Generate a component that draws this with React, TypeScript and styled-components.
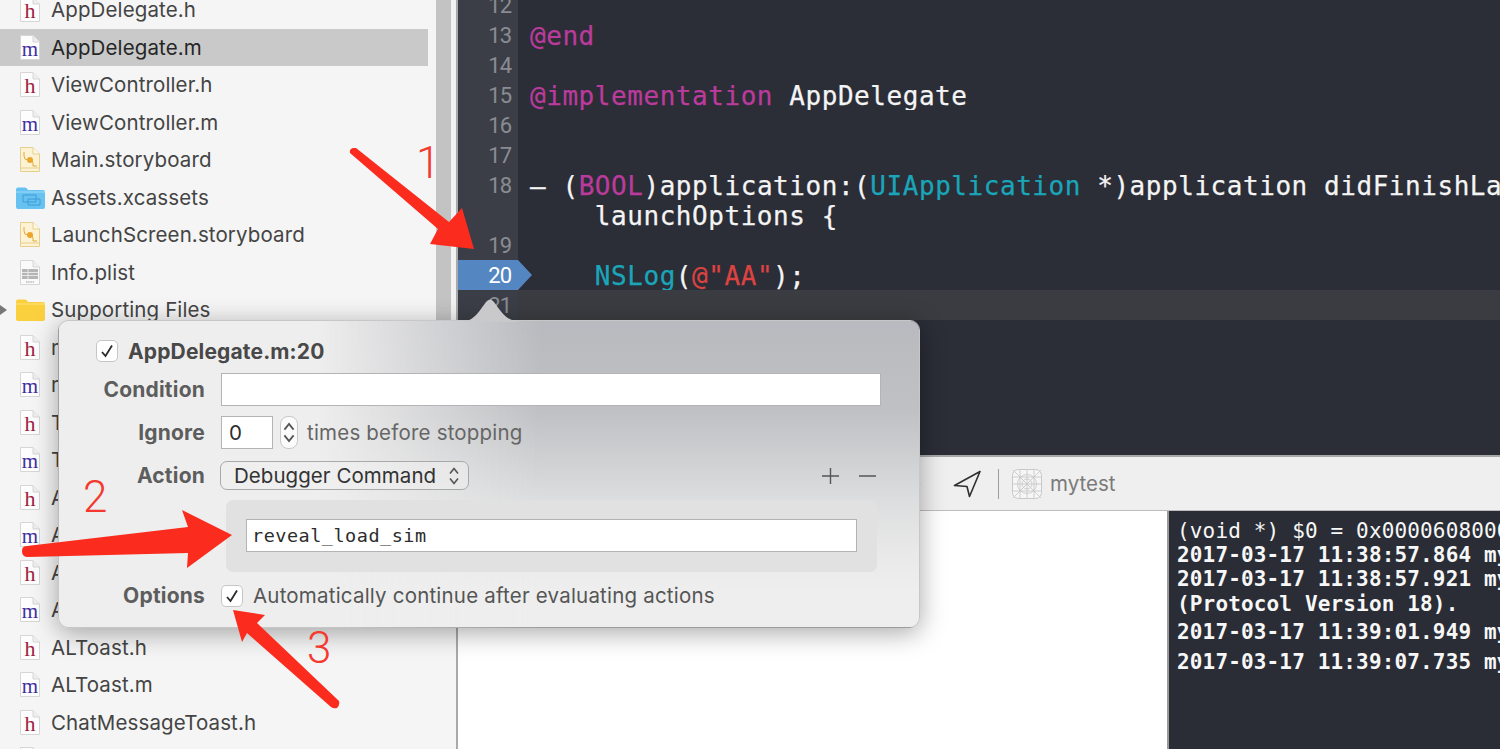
import React from "react";
import styled, { createGlobalStyle } from "styled-components";

const Global = createGlobalStyle`
  html, body { margin: 0; padding: 0; background: #fff; overflow: hidden; }
  * { box-sizing: border-box; }
`;

const UI = `"Inter", "Roboto", "Liberation Sans", sans-serif`;
const MONO = `"DejaVu Sans Mono", "Liberation Mono", monospace`;

const Page = styled.div`
  position: relative;
  width: 1500px;
  height: 749px;
  overflow: hidden;
  display: flex;
  font-family: ${UI};
`;

/* ---------- navigator ---------- */
const Sidebar = styled.aside`
  position: relative;
  flex: 0 0 458px;
  height: 749px;
  background: #f5f5f5;
  border-right: 2px solid #a9a9a9;
  overflow: hidden;
`;
const FileList = styled.ul`
  list-style: none;
  margin: -9px 0 0;
  padding: 0;
`;
const FileRow = styled.li<{ $selected?: boolean }>`
  position: relative;
  width: 428px;
  height: 37.5px;
  display: flex;
  align-items: center;
  padding-left: 51px;
  font-size: 20.5px;
  letter-spacing: 0.12px;
  white-space: nowrap;
  color: ${(p) => (p.$selected ? "#262626" : "#444444")};
  background: ${(p) => (p.$selected ? "#c9c9c9" : "transparent")};
`;
const RowIcon = styled.span<{ $wide?: boolean }>`
  position: absolute;
  left: ${(p) => (p.$wide ? "16px" : "19px")};
  top: ${(p) => (p.$wide ? "8px" : "6px")};
  display: flex;
`;
const Disclosure = styled.span`
  position: absolute;
  left: 0;
  top: 14px;
  width: 0;
  height: 0;
  border-left: 7px solid #777;
  border-top: 5px solid transparent;
  border-bottom: 5px solid transparent;
`;
const ScrollTrack = styled.div`
  position: absolute;
  left: 436px;
  top: 0;
  width: 22px;
  height: 340px;
  background: #f2f2f2;
`;
const ScrollThumb = styled.div`
  width: 15px;
  height: 100%;
  background: #c3c3c3;
`;

/* ---------- main column ---------- */
const Main = styled.main`
  flex: 1;
  min-width: 0;
  display: flex;
  flex-direction: column;
`;
const Editor = styled.section`
  flex: 0 0 465px;
  height: 465px;
  margin-top: -10px;
  background: #2b2d37;
  overflow: hidden;
`;
const Line = styled.div<{ $current?: boolean }>`
  height: 30px;
  display: flex;
  background: ${(p) => (p.$current ? "#3b3c41" : "transparent")};
`;
const Gutter = styled.div<{ $active?: boolean }>`
  position: relative;
  flex: 0 0 60px;
  padding: 1px 7px 0 0;
  text-align: right;
  font-family: "Roboto", sans-serif;
  font-size: 22px;
  letter-spacing: -1px;
  line-height: 29px;
  color: ${(p) => (p.$active ? "#ffffff" : "#8a8c92")};
  background: ${(p) => (p.$active ? "#5487c2" : "#3c3e47")};
`;
const BreakTip = styled.span`
  position: absolute;
  left: 60px;
  top: 0;
  width: 0;
  height: 0;
  border-left: 14px solid #5487c2;
  border-top: 15px solid transparent;
  border-bottom: 15px solid transparent;
`;
const Code = styled.pre`
  margin: 0;
  padding: 1px 0 0 12px;
  font-family: ${MONO};
  font-size: 26px;
  letter-spacing: 0.55px;
  line-height: 30px;
  color: #f4f4f4;
  -webkit-text-stroke: 0.25px currentColor;
  white-space: pre;
  overflow: hidden;
  flex: 1;
  min-width: 0;
`;
const Tok = styled.span<{ $c: "kw" | "type" | "str" }>`
  color: ${(p) => ({ kw: "#bb3b9c", type: "#1aa5b9", str: "#dc4341" }[p.$c])};
`;

const Toolbar = styled.div`
  flex: 0 0 56px;
  display: flex;
  align-items: center;
  padding-left: 447px;
  background: #efefef;
  border-top: 2px solid #a8a8a8;
  border-bottom: 1px solid #bdbdbd;
`;
const ToolIcon = styled.span<{ $mr: number }>`
  display: flex;
  margin-right: ${(p) => p.$mr}px;
`;
const ToolSep = styled.span`
  width: 1px;
  height: 30px;
  background: #9d9d9d;
  margin-right: 13px;
`;
const Target = styled.span`
  font-size: 20.5px;
  color: #7a7a7a;
`;
const Bottom = styled.div`
  flex: 1;
  display: flex;
  min-height: 0;
`;
const Vars = styled.div`
  flex: 0 0 709px;
  background: #ffffff;
`;
const Console = styled.div`
  flex: 1;
  min-width: 0;
  background: #2a2d36;
  border-left: 2px solid #9a9a9a;
  padding: 8px 0 0 8px;
  overflow: hidden;
  font-family: ${MONO};
  font-size: 21px;
  letter-spacing: 0.15px;
  color: #f7f7f7;
`;
const LogLine = styled.div<{ $bold?: boolean; $gap?: number }>`
  height: 24px;
  line-height: 24px;
  white-space: nowrap;
  font-weight: ${(p) => (p.$bold ? 700 : 400)};
  margin-top: ${(p) => p.$gap ?? 0}px;
`;

/* ---------- breakpoint popover ---------- */
const Popover = styled.div`
  position: absolute;
  left: 58px;
  top: 320px;
  width: 862px;
  height: 308px;
  border-radius: 10px;
  border: 1px solid rgba(0, 0, 0, 0.16);
  box-shadow: 0 5px 26px rgba(0, 0, 0, 0.34);
  padding: 19px 38px 0 0;
  display: flex;
  flex-direction: column;
  font-size: 20.5px;
  background:
    linear-gradient(90deg, #eeeeee 0, #eeeeee 30%, rgba(238, 238, 238, 0) 56%),
    linear-gradient(180deg, #b9babf 0, #c0c1c4 30%, #dcddde 58%, #e9e9e9 76%, #eeeeee 88%);
`;
const PopArrow = styled.svg`
  position: absolute;
  left: 402px;
  top: -24px;
`;
const TitleRow = styled.div`
  display: flex;
  align-items: center;
  gap: 10px;
  margin-left: 37px;
  height: 22px;
  font-weight: 700;
  font-size: 21px;
  letter-spacing: 0.15px;
  color: #484848;
`;
const FormRow = styled.div<{ $top: number; $h: number }>`
  display: grid;
  grid-template-columns: 146px 1fr;
  column-gap: 16px;
  align-items: center;
  height: ${(p) => p.$h}px;
  margin-top: ${(p) => p.$top}px;
`;
const Label = styled.label`
  text-align: right;
  font-weight: 700;
  font-size: 21px;
  letter-spacing: 0.2px;
  color: #5d5d5d;
`;
const Cluster = styled.div`
  display: flex;
  align-items: center;
  min-width: 0;
`;
const TextField = styled.div<{ $w?: number; $mono?: boolean }>`
  width: ${(p) => (p.$w ? `${p.$w}px` : "100%")};
  height: 33px;
  line-height: 31px;
  padding-left: ${(p) => (p.$mono ? 5 : 7)}px;
  background: #ffffff;
  border: 1px solid #b4b4b6;
  font-family: ${(p) => (p.$mono ? MONO : "inherit")};
  font-size: ${(p) => (p.$mono ? "18.5px" : "20.5px")};
  letter-spacing: ${(p) => (p.$mono ? "0.5px" : "0")};
  color: #2c2c2c;
`;
const Stepper = styled.span`
  width: 18px;
  height: 33px;
  margin: 0 9px 0 7px;
  background: #fbfbfb;
  border: 1px solid #c9c9c9;
  border-radius: 8px;
  display: flex;
`;
const Hint = styled.span`
  color: #666666;
  letter-spacing: 0.2px;
`;
const Select = styled.div`
  width: 249px;
  height: 29px;
  margin-left: -1px;
  display: flex;
  align-items: center;
  justify-content: space-between;
  padding: 0 7px 0 13px;
  background: rgba(240, 240, 240, 0.55);
  border: 1px solid #a9a9a9;
  border-radius: 7px;
  color: #333333;
  letter-spacing: 0.05px;
`;
const AddRemove = styled.div`
  margin-left: auto;
  margin-right: 4px;
  display: flex;
`;
const CommandBox = styled.div`
  margin: 10px 0 0 167px;
  width: 651px;
  height: 72px;
  padding: 19px 20px;
  background: #e1e1e1;
  border-radius: 7px;
`;
const CheckBox = styled.span`
  flex: none;
  width: 22px;
  height: 22px;
  background: #ffffff;
  border: 1px solid #c6c6c6;
  border-radius: 5px;
  display: flex;
  align-items: center;
  justify-content: center;
`;
const OptionText = styled.span`
  margin-left: 10px;
  color: #555555;
  letter-spacing: 0.2px;
`;

/* ---------- annotations ---------- */
const Annotations = styled.svg`
  position: absolute;
  left: 0;
  top: 0;
  pointer-events: none;
`;
const Num = styled.span<{ $x: number; $y: number }>`
  position: absolute;
  left: ${(p) => p.$x}px;
  top: ${(p) => p.$y}px;
  font-family: "Roboto", sans-serif;
  font-weight: 300;
  font-size: 44px;
  line-height: 44px;
  color: #f4392f;
`;

/* ---------- icons ---------- */
const FileIcon = ({ kind }: { kind: "h" | "m" }) => (
  <svg width="22" height="25" viewBox="0 0 22 25">
    <path d="M1.5 .5H14L20.5 7V24.5H1.5Z" fill="#fdfdfd" stroke="#d6d6d6" />
    <path d="M14 .5V7H20.5" fill="#eeeeee" stroke="#d6d6d6" />
    <text
      x="11"
      y="21"
      textAnchor="middle"
      fontFamily="'Liberation Serif', serif"
      fontSize={kind === "h" ? 22 : 21}
      fill={kind === "h" ? "#a0223f" : "#3f2f9e"}
    >
      {kind}
    </text>
  </svg>
);
const StoryIcon = () => (
  <svg width="22" height="25" viewBox="0 0 22 25">
    <path d="M1.5 .5H14L20.5 7V24.5H1.5Z" fill="#fdf3d4" stroke="#e6cf8d" />
    <path d="M14 .5V7H20.5" fill="#fff8e4" stroke="#e6cf8d" />
    <path d="M5 5V9Q5 13 9 13H11Q14 13 14 16V19H18" fill="none" stroke="#e0a93c" strokeWidth="1" />
    <circle cx="11" cy="13" r="3" fill="#eca52c" />
    <path d="M2 21H20" stroke="#e6cf8d" />
  </svg>
);
const PlistIcon = () => (
  <svg width="22" height="25" viewBox="0 0 22 25">
    <path d="M1.5 .5H14L20.5 7V24.5H1.5Z" fill="#fafafa" stroke="#d6d6d6" />
    <path d="M14 .5V7H20.5" fill="#eeeeee" stroke="#d6d6d6" />
    <path d="M3 9H19V19H3Z" fill="#b5b5b5" />
    <path d="M3 12.5H19M3 15.5H19M9 9V19" stroke="#f2f2f2" strokeWidth=".8" />
    <path d="M7 22H15" stroke="#999" strokeWidth="1.2" strokeDasharray="1.5 .7" />
  </svg>
);
const FolderIcon = ({ blue }: { blue?: boolean }) => (
  <svg width="29" height="22" viewBox="0 0 29 22">
    <path
      d="M0 2.5Q0 .5 2 .5H9Q11 .5 12 3H27Q29 3 29 5V20Q29 22 27 22H2Q0 22 0 20Z"
      fill={blue ? "#67c2f2" : "#fbd03f"}
    />
    <path d="M0 5H29" stroke={blue ? "#9adbfa" : "#fde37f"} />
    {blue && <path d="M7 8H20V15H7ZM12 12H24V18H12Z" fill="none" stroke="#3f9bd4" strokeWidth="1" />}
  </svg>
);
const CheckMark = () => (
  <svg width="14" height="14" viewBox="0 0 14 14">
    <path d="M2 8L5.5 12L12 1.5" fill="none" stroke="#2b2b2b" strokeWidth="1.8" />
  </svg>
);
const UpDown = ({ w, h }: { w: number; h: number }) => (
  <svg width={w} height={h} viewBox="0 0 14 24">
    <path d="M3 9.5L7 4.5L11 9.5M3 14.5L7 19.5L11 14.5" fill="none" stroke="#555" strokeWidth="1.6" />
  </svg>
);
const Location = () => (
  <svg width="28" height="28" viewBox="0 0 28 28">
    <path d="M27 1.5L1.5 15.5L14 16.5L16.5 26.5Z" fill="none" stroke="#2f2f2f" strokeWidth="1.6" strokeLinejoin="round" />
  </svg>
);
const AppGrid = () => (
  <svg width="30" height="30" viewBox="0 0 30 30">
    <rect x=".5" y=".5" width="29" height="29" rx="6" fill="#f6f6f6" stroke="#c8c8c8" />
    <g fill="none" stroke="#c4c4c4" strokeWidth=".8">
      <circle cx="15" cy="15" r="5" />
      <circle cx="15" cy="15" r="9.5" />
      <path d="M1 15H29M15 1V29M8 1V29M22 1V29M1 8H29M1 22H29M1 1L29 29M29 1L1 29" />
    </g>
  </svg>
);
const Dim = () => (
  <svg width="16" height="16" viewBox="0 0 16 16">
    <circle cx="8" cy="8" r="6.5" fill="none" stroke="#999" strokeWidth="1.4" />
  </svg>
);
const PlusMinus = () => (
  <svg width="56" height="16" viewBox="0 0 56 16">
    <path d="M1 8H18M9.5 0V16M38 8H55" fill="none" stroke="#555" strokeWidth="1.4" />
  </svg>
);

type Row = { name: string; icon: "h" | "m" | "story" | "blue" | "plist" | "yellow"; selected?: boolean };
const files: Row[] = [
  { name: "AppDelegate.h", icon: "h" },
  { name: "AppDelegate.m", icon: "m", selected: true },
  { name: "ViewController.h", icon: "h" },
  { name: "ViewController.m", icon: "m" },
  { name: "Main.storyboard", icon: "story" },
  { name: "Assets.xcassets", icon: "blue" },
  { name: "LaunchScreen.storyboard", icon: "story" },
  { name: "Info.plist", icon: "plist" },
  { name: "Supporting Files", icon: "yellow" },
  { name: "main.h", icon: "h" },
  { name: "main.m", icon: "m" },
  { name: "TestView.h", icon: "h" },
  { name: "TestView.m", icon: "m" },
  { name: "ALAlert.h", icon: "h" },
  { name: "ALAlert.m", icon: "m" },
  { name: "ALLoading.h", icon: "h" },
  { name: "ALLoading.m", icon: "m" },
  { name: "ALToast.h", icon: "h" },
  { name: "ALToast.m", icon: "m" },
  { name: "ChatMessageToast.h", icon: "h" },
  { name: "ChatMessageToast.m", icon: "m" },
];

const iconFor = (icon: Row["icon"]) => {
  switch (icon) {
    case "h":
    case "m":
      return <FileIcon kind={icon} />;
    case "story":
      return <StoryIcon />;
    case "plist":
      return <PlistIcon />;
    case "blue":
      return <FolderIcon blue />;
    default:
      return <FolderIcon />;
  }
};

export default function App() {
  return (
    <Page>
      <Global />
      <Sidebar>
        <FileList>
          {files.map((f) => (
            <FileRow key={f.name} $selected={f.selected}>
              {f.icon === "yellow" && <Disclosure />}
              <RowIcon $wide={f.icon === "blue" || f.icon === "yellow"}>{iconFor(f.icon)}</RowIcon>
              {f.name}
            </FileRow>
          ))}
        </FileList>
        <ScrollTrack>
          <ScrollThumb />
        </ScrollTrack>
      </Sidebar>

      <Main>
        <Editor>
          <Line><Gutter>12</Gutter><Code /></Line>
          <Line><Gutter>13</Gutter><Code><Tok $c="kw">@end</Tok></Code></Line>
          <Line><Gutter>14</Gutter><Code /></Line>
          <Line><Gutter>15</Gutter><Code><Tok $c="kw">@implementation</Tok> AppDelegate</Code></Line>
          <Line><Gutter>16</Gutter><Code /></Line>
          <Line><Gutter>17</Gutter><Code /></Line>
          <Line>
            <Gutter>18</Gutter>
            <Code>– (<Tok $c="kw">BOOL</Tok>)application:(<Tok $c="type">UIApplication</Tok> *)application didFinishLaunchingWithOptions:(NSDictionary *)</Code>
          </Line>
          <Line><Gutter /><Code>    launchOptions {"{"}</Code></Line>
          <Line><Gutter>19</Gutter><Code /></Line>
          <Line>
            <Gutter $active>20<BreakTip /></Gutter>
            <Code>    <Tok $c="type">NSLog</Tok>(<Tok $c="str">@"AA"</Tok>);</Code>
          </Line>
          <Line $current><Gutter>21</Gutter><Code /></Line>
          <Line><Gutter /><Code /></Line>
          <Line><Gutter /><Code /></Line>
          <Line><Gutter /><Code /></Line>
          <Line><Gutter /><Code /></Line>
          <Line><Gutter /><Code /></Line>
        </Editor>
        <Toolbar>
          <ToolIcon $mr={32}><Dim /></ToolIcon>
          <ToolIcon $mr={17}><Location /></ToolIcon>
          <ToolSep />
          <ToolIcon $mr={8}><AppGrid /></ToolIcon>
          <Target>mytest</Target>
        </Toolbar>
        <Bottom>
          <Vars />
          <Console>
            <LogLine>(void *) $0 = 0x0000608000012340</LogLine>
            <LogLine $bold>2017-03-17 11:38:57.864 mytest[1024:50210] AA</LogLine>
            <LogLine $bold>2017-03-17 11:38:57.921 mytest[1024:50210] Loading Reveal Server</LogLine>
            <LogLine $bold $gap={1}>(Protocol Version 18).</LogLine>
            <LogLine $bold $gap={4}>2017-03-17 11:39:01.949 mytest[1024:50210] AA</LogLine>
            <LogLine $bold $gap={6}>2017-03-17 11:39:07.735 mytest[1024:50210] AA</LogLine>
          </Console>
        </Bottom>
      </Main>

      <Popover>
        <PopArrow width="60" height="25" viewBox="0 0 60 25">
          <path d="M0 25C14 24 18 14 25 5Q29 0 33 5C40 14 44 24 60 25Z" fill="#c9c9cc" />
        </PopArrow>
        <TitleRow>
          <CheckBox><CheckMark /></CheckBox>
          AppDelegate.m:20
        </TitleRow>
        <FormRow $top={11} $h={33}>
          <Label>Condition</Label>
          <TextField />
        </FormRow>
        <FormRow $top={10} $h={33}>
          <Label>Ignore</Label>
          <Cluster>
            <TextField $w={52}>0</TextField>
            <Stepper><UpDown w={16} h={31} /></Stepper>
            <Hint>times before stopping</Hint>
          </Cluster>
        </FormRow>
        <FormRow $top={12} $h={29}>
          <Label>Action</Label>
          <Cluster>
            <Select>
              Debugger Command
              <UpDown w={14} h={24} />
            </Select>
            <AddRemove><PlusMinus /></AddRemove>
          </Cluster>
        </FormRow>
        <CommandBox>
          <TextField $mono>reveal_load_sim</TextField>
        </CommandBox>
        <FormRow $top={11} $h={22}>
          <Label>Options</Label>
          <Cluster>
            <CheckBox><CheckMark /></CheckBox>
            <OptionText>Automatically continue after evaluating actions</OptionText>
          </Cluster>
        </FormRow>
      </Popover>

      <Annotations width="1500" height="749" viewBox="0 0 1500 749">
        <g fill="#fb2b1e">
          <path d="M350 153Q349 149 353 148L356 148L449 222L462 208L474 249L430 244L438 229Z" />
          <path d="M22 551Q22 546 27 546L188 527L182 510L232 535L187 568L188 553L28 557Q22 557 22 551Z" />
          <path d="M233 610L265 615L257 623L339 701Q340 705 337 708Q334 709 331 707L247 633L242 642Z" />
        </g>
      </Annotations>
      <Num $x={416} $y={141}>1</Num>
      <Num $x={83} $y={475}>2</Num>
      <Num $x={307} $y={626}>3</Num>
    </Page>
  );
}
